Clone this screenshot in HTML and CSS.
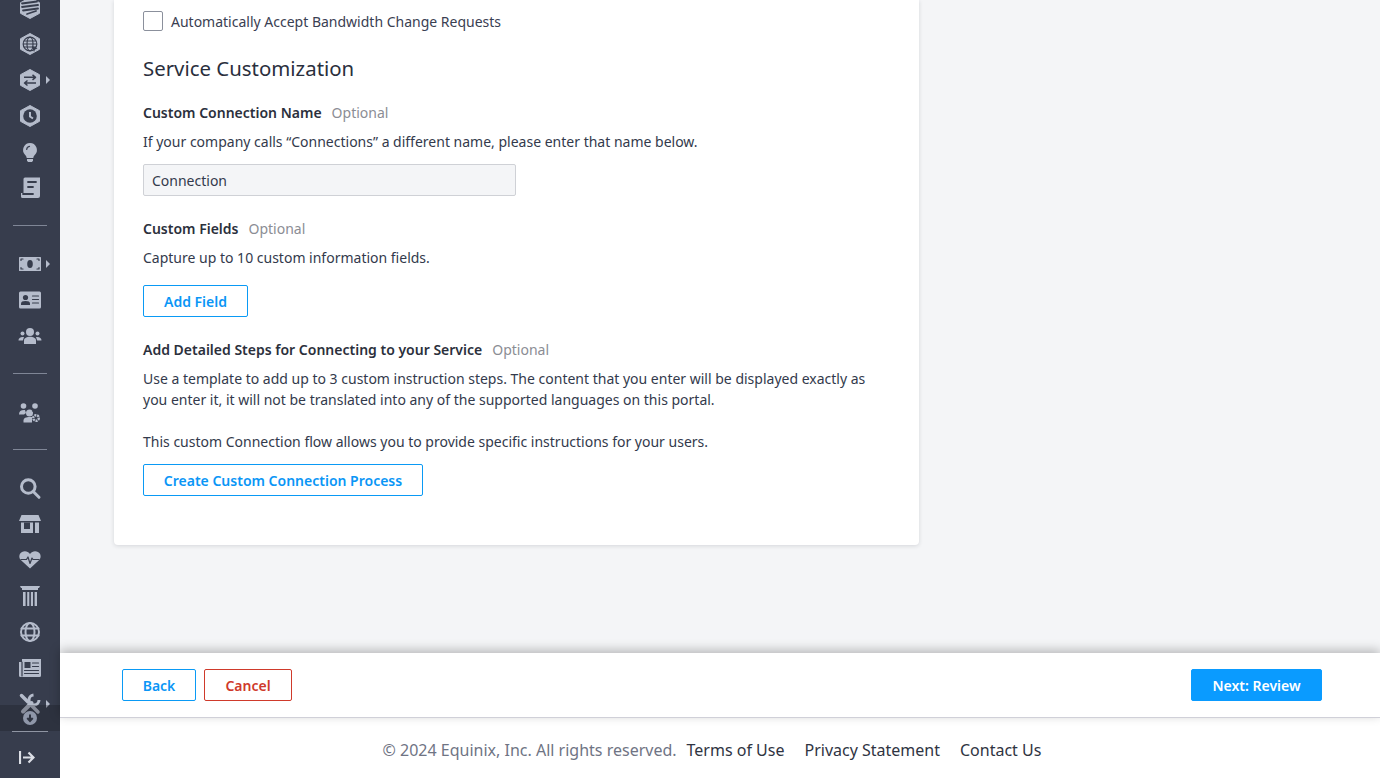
FILE: index.html
```html
<!DOCTYPE html>
<html lang="en">
<head>
<meta charset="utf-8">
<title>Service Customization</title>
<link rel="stylesheet" href="styles.css">
</head>
<body>
<aside class="sidebar">
  <nav class="nav">
    <div class="item"><svg class="icon" viewBox="0 0 24 24"><path class="hex" d="M12 1.500 21.500 6.700V17.300L12 22.500 2.500 17.300V6.700Z"/><path class="cut" d="M4 7.500 19 5.500M4 11 20 9M5 14.500 20 12.500M9 18 18 15"/></svg></div>
    <div class="item"><svg class="icon" viewBox="0 0 24 24"><path class="hex" d="M12 1.500 21.500 6.700V17.300L12 22.500 2.500 17.300V6.700Z"/><g class="cut thin"><circle cx="12" cy="12" r="6.800"/><ellipse cx="12" cy="12" rx="3" ry="6.800"/><path d="M5.500 12H18.500M6.500 9H17.500M6.500 15H17.500"/></g><path class="dark" d="M14 14 19.500 16.500 17 17.500 16 20Z"/></svg></div>
    <div class="item"><svg class="icon" viewBox="0 0 24 24"><path class="hex" d="M12 1.500 21.500 6.700V17.300L12 22.500 2.500 17.300V6.700Z"/><path class="cut arrows" d="M6 9.300H17M14.500 6.800 17.500 9.300 14.500 11.800M18 15H7M9.500 12.500 6.500 15 9.500 17.500"/></svg><span class="caret"></span></div>
    <div class="item"><svg class="icon" viewBox="0 0 24 24"><path class="hex" d="M12 1.500 21.500 6.700V17.300L12 22.500 2.500 17.300V6.700Z"/><circle class="dark" cx="12" cy="12" r="6.800"/><path class="lite" d="M12 8V12.500L15 14.500"/></svg></div>
    <div class="item"><svg class="icon" viewBox="0 0 24 24"><path class="fill" d="M12 3A7 7 0 0 0 7 14.800C8 15.900 8.500 16.800 8.700 18H15.300C15.500 16.800 16 15.900 17 14.800A7 7 0 0 0 12 3Z"/><path class="fill" d="M9 19H15V20.500L14 22H10L9 20.500Z"/><path class="cut thin" d="M8.700 9.500A3.400 3.400 0 0 1 11.500 6.300"/></svg></div>
    <div class="item"><svg class="icon" viewBox="0 0 24 24"><path class="fill" d="M7 1.500H22V20A2 2 0 0 1 20 22H4.500A1.500 1.500 0 0 1 3 20.500V17H5.500V3A1.500 1.500 0 0 1 7 1.500Z"/><path class="cut" d="M10 6H18M10 11H15M5 18H15"/></svg></div>
    <hr class="rule">
    <div class="item"><svg class="icon" viewBox="0 0 24 24"><rect class="fill" x="1" y="5" width="22" height="14" rx=".5"/><ellipse class="dark" cx="12" cy="12" rx="2.800" ry="4"/><path class="cut thin" d="M3 8.500V7H5M19 7H21V8.500M3 15.500V17H5M19 17H21V15.500"/></svg><span class="caret"></span></div>
    <div class="item"><svg class="icon" viewBox="0 0 24 24"><rect class="fill" x="1" y="3.500" width="22" height="17" rx="1.500"/><circle class="dark" cx="7.500" cy="9.500" r="2.600"/><path class="dark" d="M3 17V15.500C3 13.800 4.500 13 7.500 13s4.500.8 4.500 2.500V17Z"/><path class="cut thin" d="M14.500 8H20.500M14.500 11.500H20.500M14.500 15H20.500"/></svg></div>
    <div class="item"><svg class="icon" viewBox="0 0 24 24"><circle class="fill" cx="12" cy="8" r="4"/><circle class="fill" cx="4.500" cy="9.500" r="2"/><circle class="fill" cx="19.500" cy="9.500" r="2"/><path class="fill" d="M6 20V16.500C6 14 9 12.800 12 12.800s6 1.200 6 3.700V20Z"/><path class="fill" d="M.5 16.500C.5 14 2.500 12.500 6 13L4.800 16.500Z"/><path class="fill" d="M23.500 16.500C23.500 14 21.500 12.500 18 13L19.200 16.500Z"/></svg></div>
    <hr class="rule">
    <div class="item"><svg class="icon" viewBox="0 0 24 24"><circle class="fill" cx="5.500" cy="6" r="2.800"/><circle class="fill" cx="17" cy="6" r="2.800"/><path class="fill" d="M1 14.500C1 11 3 9.800 7 10L8 13 6 14.500Z"/><circle class="fill" cx="11.500" cy="13" r="3.500"/><path class="fill" d="M5.500 22.500V20.500C5.500 18 8 17 12 17h2v5.500Z"/><circle class="gear" cx="18" cy="18" r="2.800"/><path class="cut thin" d="M14.500 11C17 9.500 21 10 22.500 13"/></svg></div>
    <hr class="rule">
    <div class="item"><svg class="icon" viewBox="0 0 24 24"><circle class="ring" cx="10.300" cy="10.500" r="6.800"/><path class="ring" d="M15.500 15.800 21 21.300"/></svg></div>
    <div class="item"><svg class="icon" viewBox="0 0 24 24"><path class="fill" d="M3.500 3H20.500L23 9H1Z"/><path class="fill" d="M3 10.500H15V21H3ZM17 10.500H21V21H17Z"/><rect class="dark" x="6" y="10.500" width="6" height="6.500"/></svg></div>
    <div class="item"><svg class="icon" viewBox="0 0 24 24"><path class="fill" d="M12 20.500 2.800 12C.5 9.500 1 5.500 4 4c2.700-1.300 6-.8 8 2 2-2.800 5.300-3.300 8-2 3 1.500 3.500 5.500 1.200 8Z"/><path class="cut thin" d="M3 11.500H8.500L10 9 12 15.500 14 10 15 11.500H21"/></svg></div>
    <div class="item"><svg class="icon" viewBox="0 0 24 24"><path class="fill" d="M2 2H22L21 4H20V6H4V4H3ZM5 8H7.600V22H5ZM9.200 8H11.300V22H9.200ZM12.900 8H15V22H12.900ZM16.600 8H19V22H16.600Z"/></svg></div>
    <div class="item"><svg class="icon" viewBox="0 0 24 24"><g class="ring thinring"><circle cx="12" cy="12" r="9"/><ellipse cx="12" cy="12" rx="4.500" ry="9"/><path d="M3.500 8.500H20.500M3.500 15.500H20.500"/></g></svg></div>
    <div class="item"><svg class="icon" viewBox="0 0 24 24"><path class="fill" d="M4 3H23V19.500A1.500 1.500 0 0 1 21.500 21H2.500A1.500 1.500 0 0 1 1 19.500V6H4Z"/><path class="cut thin" d="M4 6V20"/><rect class="dark" x="6.500" y="6" width="6" height="6"/><path class="cut thin" d="M14.500 7H20.500M14.500 10.500H20.500M6.500 14.500H20.500M6.500 17.500H20.500"/></svg></div>
    <div class="item"><svg class="icon" viewBox="0 0 24 24"><path class="tool" d="M3.500 3.500 10 10M13.500 13.500 20 20"/><path class="tool-arm" d="M21 8A5 5 0 1 1 15.500 3"/><path class="tool-shaft" d="M13.500 11 5 19.500"/></svg><span class="caret"></span></div>
  </nav>
  <div class="dock">
    <div class="scroll-hint"><svg class="hint-icon" viewBox="0 0 14 14"><circle class="hint-disc" cx="7" cy="7" r="7"/><path class="hint-arrow" d="M7 3.500V9.500M4.300 7 7 10 9.700 7"/></svg></div>
    <div class="dock-base">
      <hr class="rule dock-rule">
      <div class="logout"><svg class="exit-icon" viewBox="0 0 16 13"><path class="exit" d="M1 0V13M4 6.500H14.500M9.500 1.500 14.500 6.500 9.500 11.500"/></svg></div>
    </div>
  </div>
</aside>
<div class="main">
  <div class="scroller">
    <section class="card">
      <label class="check-row"><span class="checkbox"></span><span>Automatically Accept Bandwidth Change Requests</span></label>
      <h2 class="title">Service Customization</h2>
      <div class="label-row"><strong>Custom Connection Name</strong><span class="optional">Optional</span></div>
      <p class="desc">If your company calls “Connections” a different name, please enter that name below.</p>
      <div class="input">Connection</div>
      <div class="label-row second"><strong>Custom Fields</strong><span class="optional">Optional</span></div>
      <p class="desc">Capture up to 10 custom information fields.</p>
      <button class="btn outline add">Add Field</button>
      <div class="label-row third"><strong>Add Detailed Steps for Connecting to your Service</strong><span class="optional">Optional</span></div>
      <p class="desc para">Use a template to add up to 3 custom instruction steps. The content that you enter will be displayed exactly as you enter it, it will not be translated into any of the supported languages on this portal.</p>
      <p class="desc para gap">This custom Connection flow allows you to provide specific instructions for your users.</p>
      <button class="btn outline create">Create Custom Connection Process</button>
    </section>
  </div>
  <div class="actions">
    <div class="left-actions">
      <button class="btn outline back">Back</button>
      <button class="btn danger">Cancel</button>
    </div>
    <button class="btn primary">Next: Review</button>
  </div>
  <footer class="footer">
    <span class="copy">© 2024 Equinix, Inc. All rights reserved.</span>
    <a class="link">Terms of Use</a>
    <a class="link">Privacy Statement</a>
    <a class="link">Contact Us</a>
  </footer>
</div>
</body>
</html>
```
FILE: styles.css
```css
* { box-sizing: border-box; }
html, body { margin: 0; height: 100%; }
body {
  display: flex;
  height: 778px;
  overflow: hidden;
  font-family: "Noto Sans", sans-serif;
  font-size: 14px;
  color: #333a4c;
  background: #f4f5f7;
}
.sidebar {
  position: relative;
  width: 60px;
  flex: none;
  background: #373d4d;
  overflow: hidden;
}
.nav { display: flex; flex-direction: column; margin-top: -10px; }
.item {
  position: relative;
  height: 36px;
  flex: none;
  display: flex;
  align-items: center;
  justify-content: center;
}
.icon { width: 24px; height: 24px; display: block; }
.hex { fill: #b5bccb; stroke: #b5bccb; stroke-width: 1; stroke-linejoin: round; }
.fill { fill: #b5bccb; }
.dark { fill: #373d4d; }
.cut { fill: none; stroke: #373d4d; stroke-width: 1.800; stroke-linecap: round; stroke-linejoin: round; }
.thin { stroke-width: 1.200; }
.arrows { stroke-width: 1.500; stroke-linecap: butt; }
.lite { fill: none; stroke: #b5bccb; stroke-width: 2; }
.ring { fill: none; stroke: #b5bccb; stroke-width: 3; stroke-linecap: round; }
.thinring { stroke-width: 2; }
.gear { fill: none; stroke: #b5bccb; stroke-width: 2.400; stroke-dasharray: 2 .8; }
.tool { fill: none; stroke: #b5bccb; stroke-width: 3.500; stroke-linecap: round; }
.tool-arm { fill: none; stroke: #b5bccb; stroke-width: 3; }
.tool-shaft { fill: none; stroke: #b5bccb; stroke-width: 4; stroke-linecap: round; }
.caret {
  position: absolute;
  left: 46px;
  top: 14px;
  border-left: 4px solid #b5bccb;
  border-top: 4px solid transparent;
  border-bottom: 4px solid transparent;
}
.rule {
  flex: none;
  width: 34px;
  height: 1px;
  margin: 19px auto 20px;
  border: 0;
  background: #7f8696;
}
.dock {
  position: absolute;
  left: 0;
  right: 0;
  bottom: 0;
  height: 73px;
}
.scroll-hint {
  height: 26px;
  background: rgba(20, 22, 30, .28);
  display: flex;
  align-items: center;
  justify-content: center;
}
.hint-icon { width: 14px; height: 14px; }
.hint-disc { fill: #8f97a9; }
.hint-arrow { fill: none; stroke: #2f3441; stroke-width: 2; }
.dock-base { height: 47px; background: #373d4d; }
.dock-rule { width: 36px; margin: 0 auto; background: #8f95a3; }
.logout {
  height: 46px;
  padding: 4px 6px 0 0;
  display: flex;
  align-items: center;
  justify-content: center;
}
.exit-icon { width: 16px; height: 13px; }
.exit { fill: none; stroke: #dcdfe6; stroke-width: 2.200; }
.main { flex: 1; min-width: 0; display: flex; flex-direction: column; }
.scroller { height: 653px; flex: none; overflow: hidden; }
.card {
  width: 805px;
  height: 545px;
  margin-left: 54px;
  padding: 11px 29px 0;
  background: #fff;
  border-radius: 0 0 4px 4px;
  box-shadow: 0 1px 4px rgba(30, 35, 50, .14);
}
.check-row { display: flex; align-items: center; gap: 8px; height: 20px; color: #3a4052; }
.checkbox {
  width: 20px;
  height: 20px;
  background: #fff;
  border: 1px solid #8b909c;
  border-radius: 2px;
}
.title { margin: 23px 0 0; height: 28px; font-size: 20.400px; line-height: 28px; font-weight: 400; color: #2a2f3d; }
.label-row { display: flex; gap: 10px; height: 20px; line-height: 20px; margin-top: 21px; }
.label-row strong { font-weight: 600; color: #2b303c; }
.label-row.second { margin-top: 23px; }
.label-row.third { margin-top: 23px; }
.optional { color: #8b8d94; }
.desc { margin: 9px 0 0; height: 20px; line-height: 20px; }
.para { height: auto; line-height: 21px; margin-top: 8px; }
.para.gap { margin-top: 21px; }
.input {
  width: 373px;
  height: 32px;
  margin-top: 12px;
  padding: 0 8px;
  line-height: 31px;
  background: #f4f5f7;
  border: 1px solid #cfd1d6;
  border-radius: 2px;
}
.btn {
  display: block;
  height: 32px;
  padding: 0;
  font: 600 14px "Noto Sans", sans-serif;
  border-radius: 2px;
  background: #fff;
}
.outline { color: #0a96f6; border: 1px solid #0a9af5; }
.add { width: 105px; margin-top: 17px; }
.create { width: 280px; margin-top: 12px; }
.actions {
  height: 65px;
  flex: none;
  display: flex;
  align-items: center;
  justify-content: space-between;
  padding: 0 58px 1px 62px;
  background: #fff;
  border-bottom: 1px solid #d0d0d8;
  box-shadow: 0 -3px 10px rgba(0, 0, 0, .25);
  position: relative;
}
.actions .btn { padding-top: 2px; }
.left-actions { display: flex; gap: 8px; }
.back { width: 74px; }
.danger { width: 88px; color: #cf3a2b; border: 1px solid #cf3a2b; }
.primary { width: 131px; color: #fff; background: #0a9bff; border: 1px solid #0a9bff; }
.footer {
  height: 60px;
  flex: none;
  display: flex;
  align-items: center;
  justify-content: center;
  padding: 4px 16px 0 0;
  background: #fff;
  font-size: 16px;
}
.copy { color: #6f7484; margin-right: 10px; }
.link { color: #2f3442; margin-right: 20px; }
.link:last-child { margin-right: 0; }
```
